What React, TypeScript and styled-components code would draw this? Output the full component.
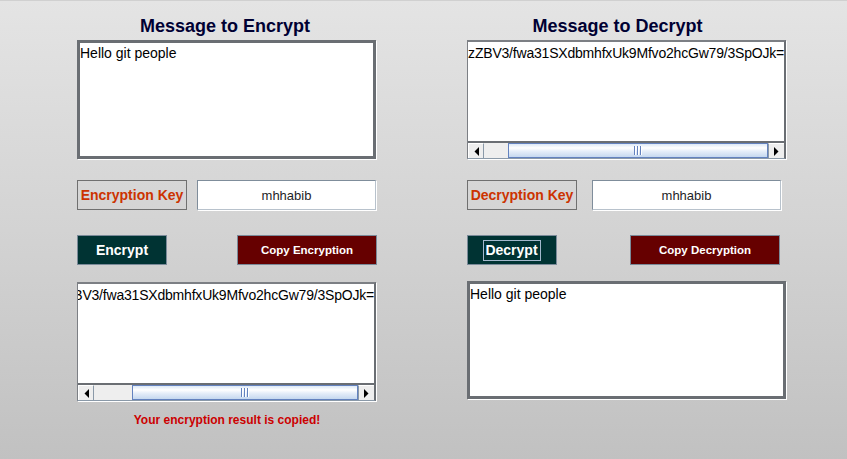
import React from "react";
import styled, { createGlobalStyle } from "styled-components";

const Global = createGlobalStyle`
  html, body { margin: 0; padding: 0; }
  body { font-family: "Liberation Sans", Arial, sans-serif; }
  * { box-sizing: border-box; }
`;

const Page = styled.div`
  width: 847px;
  height: 459px;
  overflow: hidden;
  background: linear-gradient(to bottom, #e4e4e4 0%, #d3d3d3 50%, #c1c1c1 100%);
  border-top: 1px solid #d0d0d0;
  display: flex;
  gap: 90px;
  padding: 15px 0 0 77px;
  font-family: "Liberation Sans", Arial, sans-serif;
`;

const Column = styled.div<{ $w: number }>`
  width: ${(p) => p.$w}px;
  display: flex;
  flex-direction: column;
`;

const Title = styled.h2<{ $pr: number }>`
  margin: 0 0 4px;
  padding-right: ${(p) => p.$pr}px;
  height: 20px;
  font-size: 18px;
  line-height: 20px;
  font-weight: bold;
  text-align: center;
  color: #000033;
`;

const TextBox = styled.div<{ $w: number; $h: number; $mt?: number }>`
  width: ${(p) => p.$w}px;
  height: ${(p) => p.$h}px;
  margin-top: ${(p) => p.$mt ?? 0}px;
  background: #fff;
  border: 3px solid #6a6e73;
  box-shadow: 1px 1px 0 #ffffff;
  padding: 2px 0 0 0;
  font-size: 14px;
  line-height: 17px;
  color: #000;
  white-space: pre;
`;

const Pane = styled.div<{ $w: number; $h: number; $mt?: number }>`
  width: ${(p) => p.$w}px;
  height: ${(p) => p.$h}px;
  margin-top: ${(p) => p.$mt ?? 0}px;
  display: flex;
  flex-direction: column;
  border-top: 2px solid #7c7f84;
  border-left: 1px solid #7c7f84;
  border-right: 2px solid #6a6e73;
  border-bottom: 1px solid #8a99a8;
  box-shadow: 1px 1px 0 #ffffff;
  background: #eeeeee;
`;

const Viewport = styled.div`
  flex: 1;
  min-height: 0;
  background: #fff;
  border-bottom: 2px solid #6a6e73;
  overflow: hidden;
  display: flex;
  justify-content: flex-end;
  align-items: flex-start;
  padding-top: 3px;
  font-size: 14px;
  line-height: 17px;
  color: #000;
  white-space: nowrap;
`;

const Line = styled.span`
  flex-shrink: 0;
  letter-spacing: -0.2px;
`;

const Bar = styled.div`
  height: 15px;
  flex-shrink: 0;
  display: flex;
  background: #eeeeee;
`;

const ArrowButton = styled.div<{ $side: "left" | "right" }>`
  width: 16px;
  height: 100%;
  flex-shrink: 0;
  display: flex;
  align-items: center;
  justify-content: center;
  background: #eeeeee;
  border-top: 1px solid #ffffff;
  ${(p) =>
    p.$side === "left"
      ? "border-right: 1px solid #8a99a8; border-left: 1px solid #ffffff;"
      : "border-left: 1px solid #8a99a8;"}
`;

const Track = styled.div`
  flex: 1;
  display: flex;
  background: #eeeeee;
`;

const Spacer = styled.div`
  flex-shrink: 0;
`;

const Thumb = styled.div`
  flex: 1;
  display: flex;
  align-items: center;
  justify-content: center;
  border: 1px solid #6382bf;
  background: linear-gradient(
    to bottom,
    #dce8f6 0%,
    #ffffff 30%,
    #e6eef9 55%,
    #c5d8ef 100%
  );
`;

const Grip = styled.div`
  display: flex;
  gap: 1px;
  height: 9px;
`;

const GripLine = styled.div`
  width: 1px;
  height: 100%;
  background: #6382bf;
  box-shadow: 1px 0 0 #ffffff;
  margin-right: 1px;
`;

const Row = styled.div<{ $mt: number; $gap: number }>`
  display: flex;
  align-items: stretch;
  height: 30px;
  margin-top: ${(p) => p.$mt}px;
  gap: ${(p) => p.$gap}px;
`;

const KeyLabel = styled.div`
  width: 110px;
  border: 1px solid #707070;
  display: flex;
  align-items: center;
  justify-content: center;
  font-size: 14px;
  font-weight: bold;
  color: #cc3300;
  white-space: nowrap;
`;

const KeyField = styled.div<{ $w: number }>`
  width: ${(p) => p.$w}px;
  background: #fff;
  border-top: 1px solid #7f8d9b;
  border-left: 1px solid #7f8d9b;
  border-right: 1px solid #b8c2cc;
  border-bottom: 1px solid #b8c2cc;
  box-shadow: 1px 1px 0 #ffffff;
  display: flex;
  align-items: center;
  justify-content: center;
  font-size: 13px;
  color: #1e1e28;
`;

const ActionButton = styled.div<{ $w: number; $bg: string; $fs: number }>`
  width: ${(p) => p.$w}px;
  background: ${(p) => p.$bg};
  border: 1px solid #7a8a99;
  display: flex;
  align-items: center;
  justify-content: center;
  color: #ffffff;
  font-weight: bold;
  font-size: ${(p) => p.$fs}px;
  white-space: nowrap;
`;

const FocusRing = styled.span`
  display: inline-block;
  border: 1px solid #a3b8cc;
  padding: 0 2px 0 1px;
  line-height: 19px;
`;

const Status = styled.div`
  margin-top: 12px;
  text-align: center;
  font-size: 12px;
  line-height: 14px;
  font-weight: bold;
  color: #cc0000;
`;

const Triangle = ({ dir }: { dir: "left" | "right" }) => (
  <svg width="5" height="9" viewBox="0 0 5 9">
    {dir === "left" ? (
      <polygon points="5,0 5,9 0.5,4.5" fill="#000" />
    ) : (
      <polygon points="0,0 0,9 4.5,4.5" fill="#000" />
    )}
  </svg>
);

const ScrollBar = ({ offset }: { offset: number }) => (
  <Bar>
    <ArrowButton $side="left">
      <Triangle dir="left" />
    </ArrowButton>
    <Track>
      <Spacer style={{ width: offset }} />
      <Thumb>
        <Grip>
          <GripLine />
          <GripLine />
          <GripLine />
        </Grip>
      </Thumb>
    </Track>
    <ArrowButton $side="right">
      <Triangle dir="right" />
    </ArrowButton>
  </Bar>
);

const CIPHER = "zZBV3/fwa31SXdbmhfxUk9Mfvo2hcGw79/3SpOJk=";

export default function App() {
  return (
    <>
      <Global />
      <Page>
        <Column $w={300}>
          <Title $pr={4}>Message to Encrypt</Title>
          <TextBox $w={299} $h={119}>Hello git people</TextBox>
          <Row $mt={21} $gap={10}>
            <KeyLabel>Encryption Key</KeyLabel>
            <KeyField $w={179}>mhhabib</KeyField>
          </Row>
          <Row $mt={25} $gap={70}>
            <ActionButton $w={90} $bg="#003333" $fs={14}>
              Encrypt
            </ActionButton>
            <ActionButton $w={140} $bg="#660000" $fs={11.5}>
              Copy Encryption
            </ActionButton>
          </Row>
          <Pane $w={299} $h={119} $mt={17}>
            <Viewport>
              <Line>{CIPHER}</Line>
            </Viewport>
            <ScrollBar offset={38} />
          </Pane>
          <Status>Your encryption result is copied!</Status>
        </Column>
        <Column $w={320}>
          <Title $pr={19}>Message to Decrypt</Title>
          <Pane $w={319} $h={119}>
            <Viewport>
              <Line>{CIPHER}</Line>
            </Viewport>
            <ScrollBar offset={24} />
          </Pane>
          <Row $mt={21} $gap={15}>
            <KeyLabel>Decryption Key</KeyLabel>
            <KeyField $w={189}>mhhabib</KeyField>
          </Row>
          <Row $mt={25} $gap={73}>
            <ActionButton $w={90} $bg="#003333" $fs={14}>
              <FocusRing>Decrypt</FocusRing>
            </ActionButton>
            <ActionButton $w={150} $bg="#660000" $fs={11.5}>
              Copy Decryption
            </ActionButton>
          </Row>
          <TextBox $w={319} $h={118} $mt={16}>
            Hello git people
          </TextBox>
        </Column>
      </Page>
    </>
  );
}
